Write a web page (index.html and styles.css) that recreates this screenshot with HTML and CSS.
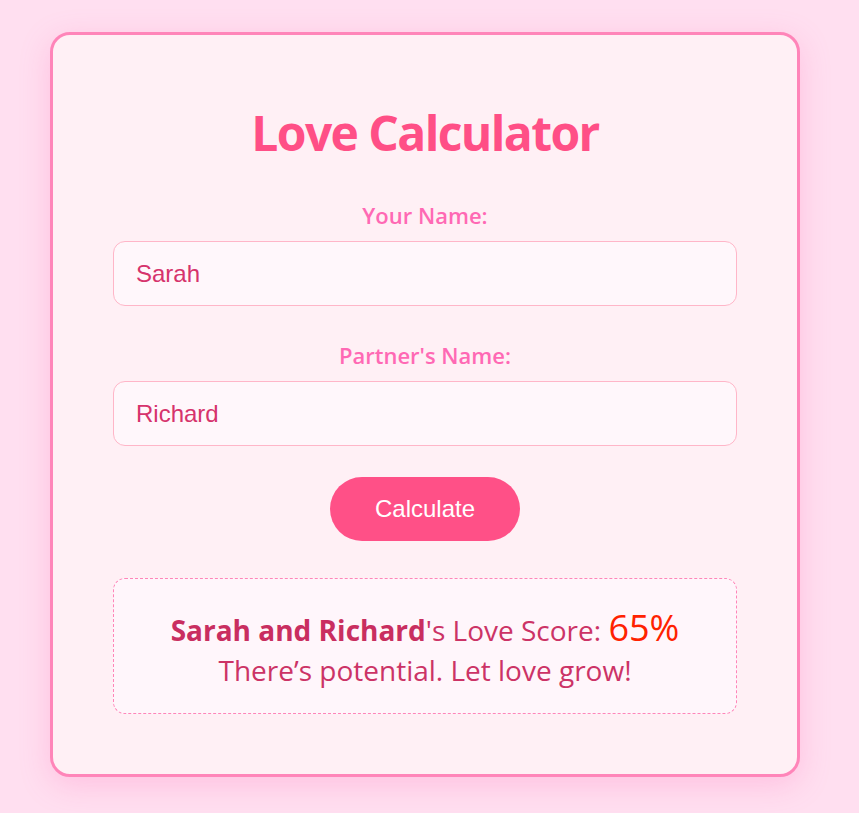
FILE: index.html
```html
<!DOCTYPE html>
<html lang="en">
<head>
<meta charset="utf-8">
<title>Love Calculator</title>
<link rel="stylesheet" href="styles.css">
</head>
<body>
<main class="card">
  <h1 class="title">Love Calculator</h1>
  <label class="label" for="name1">Your Name:</label>
  <input class="field" id="name1" type="text" value="Sarah">
  <label class="label" for="name2">Partner's Name:</label>
  <input class="field" id="name2" type="text" value="Richard">
  <button class="btn" type="button">Calculate</button>
  <div class="result">
    <p class="line"><strong class="names">Sarah and Richard</strong>'s Love Score: <span class="score">65%</span></p>
    <p class="line">There’s potential. Let love grow!</p>
  </div>
</main>
</body>
</html>
```
FILE: styles.css
```css
* { box-sizing: border-box; }
html, body { height: 100%; }
body {
  margin: 0;
  padding: 32px 0 0 50px;
  background: #ffdff0;
  font-family: "Open Sans", "Noto Sans", sans-serif;
}
.card {
  width: 750px;
  background: #fff0f5;
  border: 3px solid #ff85b9;
  border-radius: 20px;
  padding: 67px 60px 60px;
  display: flex;
  flex-direction: column;
  align-items: center;
  box-shadow: 0 8px 30px rgba(255, 105, 180, 0.25);
}
.title {
  margin: 0 0 36px;
  font-size: 48px;
  font-weight: 700;
  color: #ff4f86;
  line-height: 1.3;
  letter-spacing: -1.6px;
}
.label {
  font-size: 22px;
  font-weight: 600;
  color: #ff69b4;
  margin-bottom: 11px;
}
.field {
  width: 100%;
  height: 65px;
  padding: 0 22px;
  border: 1px solid #ffb6c8;
  border-radius: 12px;
  background: #fff7fb;
  font-family: "Liberation Sans", Arial, sans-serif;
  font-size: 24px;
  color: #d6336c;
  margin-bottom: 34px;
  outline: none;
}
.btn {
  margin-top: -3px;
  width: 190px;
  height: 64px;
  border: none;
  border-radius: 32px;
  background: #ff5087;
  color: #fff;
  font-family: "Liberation Sans", Arial, sans-serif;
  font-size: 24px;
  margin-bottom: 37px;
}
.result {
  width: 100%;
  border: 1px dashed #ff85b9;
  border-radius: 12px;
  background: #fff6fb;
  padding: 29px 20px 23px;
  text-align: center;
  color: #cc3366;
  font-size: 28px;
}
.line { margin: 0; line-height: 40px; }
.names { font-weight: 700; color: #c92e60; }
.score { color: #ff2200; font-size: 36px; }
```
